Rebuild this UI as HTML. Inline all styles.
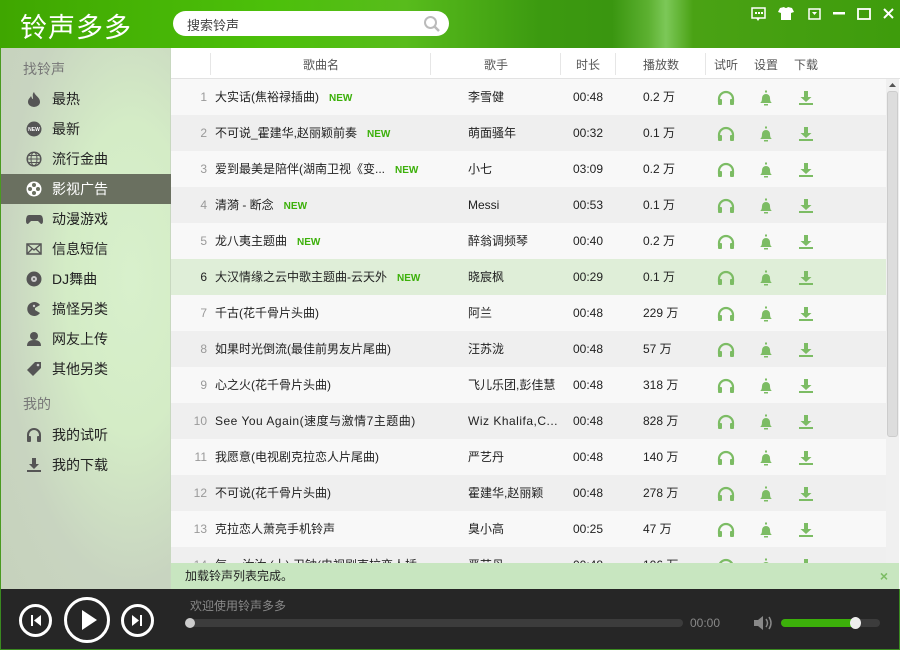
<!DOCTYPE html>
<html><head><meta charset="utf-8"><style>
*{margin:0;padding:0;box-sizing:border-box}
body{width:900px;height:650px;overflow:hidden;position:relative;font-family:"Liberation Sans","Noto Sans CJK SC",sans-serif;font-size:12px;color:#333;background:#fff}
.hdr{position:absolute;left:0;top:0;width:900px;height:48px;background:linear-gradient(90deg,#3fa600 0%,#4cc00a 30%,#58bc1c 45%,#3c9a10 60%,#3a9610 68%,#5cb030 72%,#7cc858 74%,#4aa214 77%,#3e9c0c 100%)}
.logo{position:absolute;left:20px;top:6px;font-size:27px;color:#fff;letter-spacing:1px}
.search{position:absolute;left:173px;top:11px;width:276px;height:25px;background:#fff;border-radius:13px}
.search span{position:absolute;left:14px;top:4px;font-size:13px;color:#444}
.side{position:absolute;left:0;top:48px;width:171px;height:541px;background:radial-gradient(ellipse at 130px 230px,#d8f0cc 0%,#d4ecc6 35%,#c8d4c0 70%,#c6d2bc 100%);border-left:1px solid #4a9a20;border-right:1px solid #c8d8c0}
.side .h{position:absolute;left:22px;font-size:14px;color:#777}
.side .it{position:absolute;left:0;width:170px;height:30px;font-size:14px;color:#222;line-height:30px;padding-left:51px}
.side .it.sel{background:#6a7060;color:#fff}
.side .it svg{position:absolute;left:25px;top:7px}
.th{position:absolute;left:171px;top:49px;width:729px;height:30px;background:#fff;border-bottom:1px solid #e2e2e2}
.th span{position:absolute;top:7px;font-size:12px;color:#555;transform:translateX(-50%)}
.th i{position:absolute;top:4px;width:1px;height:22px;background:#e6e6e6}
.row{position:absolute;left:171px;width:715px;height:36px;line-height:36px;font-size:12px;color:#222}
.row span{position:absolute;white-space:nowrap}
.n{width:36px;text-align:right;color:#999}
.new{color:#3cb00a;font-size:10px;font-weight:bold;margin-left:10px}
.sb{position:absolute;left:886px;top:79px;width:13px;height:484px;background:#f0f0f0}
.sb div{position:absolute;left:1px;top:12px;width:11px;height:346px;background:#ddd;border:1px solid #ccc;border-radius:3px}
.st{position:absolute;left:171px;top:563px;width:728px;height:26px;background:#c8e6c0;font-size:12px;line-height:26px;padding-left:14px;color:#222}
.pl{position:absolute;left:0;top:589px;width:900px;height:61px;background:#262626;border:1px solid #3a8a20;border-top:none}
.cb{position:absolute;border:3px solid #fff;border-radius:50%}
</style></head><body>
<div class="hdr">
 <div class="logo">铃声多多</div>
 <div class="search"><span>搜索铃声</span>
 <svg style="position:absolute;right:8px;top:4px" width="18" height="18" viewBox="0 0 18 18"><circle cx="7.5" cy="7.5" r="5.5" fill="none" stroke="#bbb" stroke-width="2"/><path d="M11.5 11.5l4.5 4.5" stroke="#bbb" stroke-width="2.5"/></svg></div>
 <svg style="position:absolute;left:750px;top:6px" width="145" height="16" viewBox="0 0 145 16">
  <rect x="2" y="2" width="13" height="10" fill="none" stroke="#fff" stroke-width="1.5"/><path d="M6 12l2 3 2-3" fill="#fff"/><rect x="5" y="6" width="2" height="2" fill="#fff"/><rect x="8" y="6" width="2" height="2" fill="#fff"/><rect x="11" y="6" width="2" height="2" fill="#fff"/>
  <path d="M30 2l4-1q2 2 4 0l4 1 2 4-3 1v7h-10v-7l-3-1z" fill="#fff"/>
  <rect x="59" y="3" width="11" height="10" fill="none" stroke="#fff" stroke-width="1.5"/><path d="M62 6h5l-2.5 3z" fill="#fff"/>
  <rect x="83" y="6" width="12" height="2.5" fill="#fff"/>
  <rect x="108" y="3" width="12" height="10" fill="none" stroke="#fff" stroke-width="1.8"/>
  <path d="M134 3l9 9M143 3l-9 9" stroke="#fff" stroke-width="2"/>
 </svg>
</div>
<div class="side">
 <div class="h" style="top:11px">找铃声</div>
 <div class="it" style="top:36px"><svg width="16" height="16"><path d="M8 1c1 4 6 5 6 10a6 5 0 0 1-12 0c0-3 2-4 3-6 1 2 1 3 2 3 0-3-1-5 1-7z" fill="#555"/></svg>最热</div>
 <div class="it" style="top:66px"><svg width="16" height="16"><circle cx="8" cy="8" r="7.5" fill="#555"/><text x="8" y="10" font-size="5" fill="#fff" text-anchor="middle" font-weight="bold">NEW</text></svg>最新</div>
 <div class="it" style="top:96px"><svg width="16" height="16"><circle cx="8" cy="8" r="6.8" fill="none" stroke="#555" stroke-width="1.5"/><ellipse cx="8" cy="8" rx="3" ry="6.8" fill="none" stroke="#555"/><path d="M1 8h14M2 4.5h12M2 11.5h12" stroke="#555"/></svg>流行金曲</div>
 <div class="it sel" style="top:126px"><svg width="16" height="16"><circle cx="8" cy="8" r="7.5" fill="#fff"/><circle cx="8" cy="4" r="2" fill="#6a7060"/><circle cx="8" cy="12" r="2" fill="#6a7060"/><circle cx="4" cy="8" r="2" fill="#6a7060"/><circle cx="12" cy="8" r="2" fill="#6a7060"/></svg>影视广告</div>
 <div class="it" style="top:156px"><svg width="17" height="16"><path d="M3 4h11q3 0 3 6 0 3-2 3l-3-3h-7l-3 3q-2 0-2-3 0-6 3-6z" fill="#555"/></svg>动漫游戏</div>
 <div class="it" style="top:186px"><svg width="16" height="16"><rect x="1" y="3" width="14" height="10" fill="none" stroke="#555" stroke-width="1.5"/><path d="M1 3l7 6 7-6M1 13l5-5M15 13l-5-5" stroke="#555" fill="none" stroke-width="1.3"/></svg>信息短信</div>
 <div class="it" style="top:216px"><svg width="16" height="16"><circle cx="8" cy="8" r="7.5" fill="#555"/><circle cx="8" cy="8" r="3" fill="#ccc"/><circle cx="8" cy="8" r="1" fill="#555"/></svg>DJ舞曲</div>
 <div class="it" style="top:246px"><svg width="16" height="16"><path d="M14 4a7 7 0 1 0 0 8l-5-3v-2z" fill="#555"/><circle cx="8" cy="5" r="1.2" fill="#ccc"/></svg>搞怪另类</div>
 <div class="it" style="top:276px"><svg width="16" height="16"><circle cx="8" cy="5" r="4" fill="#555"/><path d="M1 15q0-6 7-6t7 6z" fill="#555"/></svg>网友上传</div>
 <div class="it" style="top:306px"><svg width="16" height="16"><path d="M9 1h6v6l-8 8-6-6z" fill="#555"/><circle cx="12" cy="4" r="1.3" fill="#ccc"/></svg>其他另类</div>
 <div class="h" style="top:346px">我的</div>
 <div class="it" style="top:372px"><svg width="16" height="16"><path d="M2 12V8a6 6 0 0 1 12 0v4" fill="none" stroke="#555" stroke-width="2"/><rect x="1" y="9" width="4" height="6" rx="1" fill="#555"/><rect x="11" y="9" width="4" height="6" rx="1" fill="#555"/></svg>我的试听</div>
 <div class="it" style="top:402px"><svg width="16" height="16"><path d="M6 1h4v6h3l-5 5-5-5h3z" fill="#555"/><rect x="1" y="13" width="14" height="2" fill="#555"/></svg>我的下载</div>
</div>
<div class="th">
 <i style="left:39px"></i><i style="left:259px"></i><i style="left:389px"></i><i style="left:444px"></i><i style="left:534px"></i>
 <span style="left:150px">歌曲名</span><span style="left:325px">歌手</span><span style="left:417px">时长</span><span style="left:490px">播放数</span><span style="left:555px">试听</span><span style="left:595px">设置</span><span style="left:635px">下载</span>
</div>
<div class="row" style="top:79px;background:#f8f8f8"><span class="n">1</span><span style="left:44px">大实话(焦裕禄插曲)<b class="new">NEW</b></span><span style="left:297px">李雪健</span><span style="left:402px">00:48</span><span style="left:472px">0.2 万</span></div>
<div class="row" style="top:115px;background:#efefef"><span class="n">2</span><span style="left:44px">不可说_霍建华,赵丽颖前奏<b class="new">NEW</b></span><span style="left:297px">萌面骚年</span><span style="left:402px">00:32</span><span style="left:472px">0.1 万</span></div>
<div class="row" style="top:151px;background:#f8f8f8"><span class="n">3</span><span style="left:44px">爱到最美是陪伴(湖南卫视《变...<b class="new">NEW</b></span><span style="left:297px">小七</span><span style="left:402px">03:09</span><span style="left:472px">0.2 万</span></div>
<div class="row" style="top:187px;background:#efefef"><span class="n">4</span><span style="left:44px">清漪 - 断念<b class="new">NEW</b></span><span style="left:297px">Messi</span><span style="left:402px">00:53</span><span style="left:472px">0.1 万</span></div>
<div class="row" style="top:223px;background:#f8f8f8"><span class="n">5</span><span style="left:44px">龙八夷主题曲<b class="new">NEW</b></span><span style="left:297px">醉翁调频琴</span><span style="left:402px">00:40</span><span style="left:472px">0.2 万</span></div>
<div class="row" style="top:259px;background:#dfeed8"><span class="n" style="color:#222">6</span><span style="left:44px">大汉情缘之云中歌主题曲-云天外<b class="new">NEW</b></span><span style="left:297px">晓宸枫</span><span style="left:402px">00:29</span><span style="left:472px">0.1 万</span></div>
<div class="row" style="top:295px;background:#f8f8f8"><span class="n">7</span><span style="left:44px">千古(花千骨片头曲)</span><span style="left:297px">阿兰</span><span style="left:402px">00:48</span><span style="left:472px">229 万</span></div>
<div class="row" style="top:331px;background:#efefef"><span class="n">8</span><span style="left:44px">如果时光倒流(最佳前男友片尾曲)</span><span style="left:297px">汪苏泷</span><span style="left:402px">00:48</span><span style="left:472px">57 万</span></div>
<div class="row" style="top:367px;background:#f8f8f8"><span class="n">9</span><span style="left:44px">心之火(花千骨片头曲)</span><span style="left:297px">飞儿乐团,彭佳慧</span><span style="left:402px">00:48</span><span style="left:472px">318 万</span></div>
<div class="row" style="top:403px;background:#efefef"><span class="n">10</span><span style="left:44px;letter-spacing:.5px">See You Again(速度与激情7主题曲)</span><span style="left:297px;letter-spacing:.5px">Wiz Khalifa,C...</span><span style="left:402px">00:48</span><span style="left:472px">828 万</span></div>
<div class="row" style="top:439px;background:#f8f8f8"><span class="n">11</span><span style="left:44px">我愿意(电视剧克拉恋人片尾曲)</span><span style="left:297px">严艺丹</span><span style="left:402px">00:48</span><span style="left:472px">140 万</span></div>
<div class="row" style="top:475px;background:#efefef"><span class="n">12</span><span style="left:44px">不可说(花千骨片头曲)</span><span style="left:297px">霍建华,赵丽颖</span><span style="left:402px">00:48</span><span style="left:472px">278 万</span></div>
<div class="row" style="top:511px;background:#f8f8f8"><span class="n">13</span><span style="left:44px">克拉恋人萧亮手机铃声</span><span style="left:297px">臭小高</span><span style="left:402px">00:25</span><span style="left:472px">47 万</span></div>
<div class="row" style="top:547px;height:16px;overflow:hidden;background:#efefef"><div style="position:absolute;top:0;left:0;width:715px;height:36px"><span class="n">14</span><span style="left:44px">气 一汝汝 (十) 卫钟(电视剧克拉恋人插</span><span style="left:297px">严艺丹</span><span style="left:402px">00:48</span><span style="left:472px">106 万</span></div></div>
<svg style="position:absolute;left:171px;top:79px" width="715" height="484">
 <defs>
  <g id="ic">
   <path d="M548 14v-3a7 7 0 0 1 14 0v3" fill="none" stroke="#7cbc64" stroke-width="2.2"/><rect x="547" y="11" width="4" height="6" rx="1" fill="#7cbc64"/><rect x="559" y="11" width="4" height="6" rx="1" fill="#7cbc64"/>
   <path d="M589 15q2-1 2-5a4 4 0 0 1 8 0q0 4 2 5z" fill="#7cbc64"/><rect x="594" y="2.5" width="2" height="2" fill="#7cbc64"/><rect x="593" y="16" width="4" height="1.5" fill="#7cbc64"/>
   <path d="M633 3h4v6h3.5l-5.5 5-5.5-5h3.5z" fill="#7cbc64"/><rect x="628" y="15" width="14" height="2" fill="#7cbc64"/>
  </g>
 </defs>
 <use href="#ic" y="9"/><use href="#ic" y="45"/><use href="#ic" y="81"/><use href="#ic" y="117"/><use href="#ic" y="153"/><use href="#ic" y="189"/><use href="#ic" y="225"/><use href="#ic" y="261"/><use href="#ic" y="297"/><use href="#ic" y="333"/><use href="#ic" y="369"/><use href="#ic" y="405"/><use href="#ic" y="441"/><use href="#ic" y="477"/>
</svg>
<div class="sb"><svg style="position:absolute;left:3px;top:3px" width="7" height="5"><path d="M0 5l3.5-4 3.5 4z" fill="#555"/></svg><div></div></div>
<div class="st">加载铃声列表完成。<span style="position:absolute;right:11px;top:0;color:#7cbc64;font-weight:bold;font-size:14px">×</span></div>
<div class="pl">
 <div class="cb" style="left:18px;top:15px;width:33px;height:33px"></div>
 <svg style="position:absolute;left:18px;top:15px" width="33" height="33"><rect x="12" y="11" width="2" height="11" fill="#fff"/><path d="M22 11v11l-7-5.5z" fill="#fff"/></svg>
 <div class="cb" style="left:63px;top:8px;width:46px;height:46px"></div>
 <svg style="position:absolute;left:63px;top:8px" width="46" height="46"><path d="M18 13v20l15-10z" fill="#fff"/></svg>
 <div class="cb" style="left:120px;top:15px;width:33px;height:33px"></div>
 <svg style="position:absolute;left:120px;top:15px" width="33" height="33"><path d="M11 11v11l7-5.5z" fill="#fff"/><rect x="19" y="11" width="2" height="11" fill="#fff"/></svg>
 <div style="position:absolute;left:189px;top:8px;color:#888;font-size:12px">欢迎使用铃声多多</div>
 <div style="position:absolute;left:185px;top:30px;width:497px;height:8px;border-radius:4px;background:#3c3c3c"></div>
 <div style="position:absolute;left:184px;top:29px;width:10px;height:10px;border-radius:50%;background:#ccc"></div>
 <div style="position:absolute;left:689px;top:27px;color:#888;font-size:12px">00:00</div>
 <svg style="position:absolute;left:752px;top:25px" width="22" height="18"><path d="M1 6h4l5-4v14l-5-4h-4z" fill="#888"/><path d="M13 5q3 4 0 8M16 3q4 6 0 12" stroke="#888" fill="none" stroke-width="1.5"/></svg>
 <div style="position:absolute;left:780px;top:30px;width:99px;height:8px;border-radius:4px;background:#3c3c3c"></div>
 <div style="position:absolute;left:780px;top:30px;width:75px;height:8px;border-radius:4px;background:#3cb00a"></div>
 <div style="position:absolute;left:849px;top:28px;width:11px;height:12px;border-radius:50%;background:#eee"></div>
</div>
</body></html>
